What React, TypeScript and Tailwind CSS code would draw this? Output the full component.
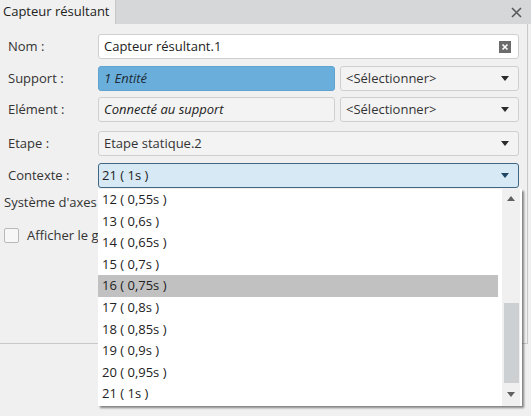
import React from "react";

const items = [
  "12 ( 0,55s )",
  "13 ( 0,6s )",
  "14 ( 0,65s )",
  "15 ( 0,7s )",
  "16 ( 0,75s )",
  "17 ( 0,8s )",
  "18 ( 0,85s )",
  "19 ( 0,9s )",
  "20 ( 0,95s )",
  "21 ( 1s )",
];

function Caret({ color = "#2b2b2b" }: { color?: string }) {
  return (
    <svg width="8" height="5" viewBox="0 0 8 5" className="shrink-0">
      <path d="M0 0 H8 L4 5 Z" fill={color} />
    </svg>
  );
}

function Select({ text, className = "" }: { text: string; className?: string }) {
  return (
    <div
      className={
        "h-[25px] flex items-center justify-between pl-[5px] pr-[9px] rounded-[3px] border border-[#cfcfcf] bg-[#f3f3f3] " +
        className
      }
    >
      <span>{text}</span>
      <Caret />
    </div>
  );
}

function Row({ label, children, className = "" }: { label: string; children: React.ReactNode; className?: string }) {
  return (
    <div className={"flex items-center " + className}>
      <div className="w-[98px] shrink-0 pl-[8px]">{label}</div>
      <div className="flex-1 flex gap-[5px] pr-[8px]">{children}</div>
    </div>
  );
}

export default function App() {
  return (
    <div
      className="relative w-[531px] h-[416px] overflow-hidden bg-[#f0f0f0] text-[13px] text-[#333]"
      style={{ fontFamily: '"Open Sans", "Noto Sans", sans-serif' }}
    >
      {/* tab bar */}
      <div className="h-[24px] flex bg-[#d5d7d9]">
        <div className="h-[24px] bg-[#f0f0f0] border-r border-[#c4c6c8] pl-[3px] pr-[5px] flex items-center text-[#222]">
          Capteur résultant
        </div>
        <div className="flex-1" />
        <div className="w-[24px] flex items-center justify-center pr-[6px]">
          <svg width="11" height="11" viewBox="0 0 11 11">
            <path d="M1 1 L10 10 M10 1 L1 10" stroke="#5a5a5a" strokeWidth="1.6" />
          </svg>
        </div>
      </div>

      {/* panel */}
      <div className="w-[528px] h-[320px] border-r border-b border-[#c9c9c9] pt-[10px]">
        <Row label="Nom :">
          <div className="flex-1 h-[25px] flex items-center justify-between pl-[5px] pr-[7px] rounded-[3px] border border-[#cfcfcf] bg-white text-[#222]">
            <span>Capteur résultant.1</span>
            <div className="w-[12px] h-[12px] bg-[#6b6b6b] flex items-center justify-center">
              <svg width="8" height="8" viewBox="0 0 8 8">
                <path d="M1.5 1.5 L6.5 6.5 M6.5 1.5 L1.5 6.5" stroke="white" strokeWidth="1.6" />
              </svg>
            </div>
          </div>
        </Row>
        <Row label="Support :" className="mt-[7px]">
          <div className="w-[237px] h-[25px] flex items-center pl-[5px] rounded-[3px] border border-[#5fa3cf] bg-[#6aafdb] italic text-[#1d2b36]">
            1 Entité
          </div>
          <Select text="<Sélectionner>" className="flex-1" />
        </Row>
        <Row label="Elément :" className="mt-[6px]">
          <div className="w-[237px] h-[25px] flex items-center pl-[5px] rounded-[3px] border border-[#cfcfcf] bg-[#f3f3f3] italic text-[#222]">
            Connecté au support
          </div>
          <Select text="<Sélectionner>" className="flex-1" />
        </Row>
        <Row label="Etape :" className="mt-[9px]">
          <Select text="Etape statique.2" className="flex-1" />
        </Row>
        <Row label="Contexte :" className="mt-[7px]">
          <div className="flex-1 h-[25px] flex items-center justify-between pl-[3px] pr-[9px] rounded-[3px] border border-[#3f6683] bg-[#d6e9f5] text-[#222]">
            <span>21 ( 1s )</span>
            <Caret color="#1f4563" />
          </div>
        </Row>
        {/* these two rows are covered by the open list; clip them at its left edge */}
        <div className="mt-[5px] pl-[4px] w-[98px] h-[20px] flex items-center overflow-hidden whitespace-nowrap">
          Système d'axes :
        </div>
        <div className="mt-[13px] pl-[4px] w-[98px] flex items-center gap-[8px] overflow-hidden whitespace-nowrap">
          <div className="w-[15px] h-[15px] shrink-0 border border-[#b9b9b9] bg-[#f7f7f7] rounded-[2px]" />
          <span>Afficher le graphe</span>
        </div>
      </div>

      {/* open dropdown list */}
      <div className="absolute left-[98px] top-[189px] w-[424px] h-[217px] bg-white flex shadow-[2px_2px_2px_rgba(0,0,0,0.45)] text-[#222]">
        <div className="flex-1 flex flex-col pr-[4px]">
          {items.map((it, i) => (
            <div
              key={it}
              className={"h-[21.6px] flex items-center pl-[4px] " + (i === 4 ? "bg-[#c1c1c1]" : "")}
            >
              {it}
            </div>
          ))}
        </div>
        <div className="w-[18px] mr-[2px] bg-[#f0f0f0] flex flex-col items-center">
          <div className="h-[18px] flex items-center justify-center">
            <svg width="8" height="5" viewBox="0 0 8 5">
              <path d="M0 5 H8 L4 0 Z" fill="#606060" />
            </svg>
          </div>
          <div className="h-[96px]" />
          <div className="w-[15px] h-[80px] bg-[#cdd0d2]" />
          <div className="flex-1 flex items-center justify-center">
            <svg width="8" height="5" viewBox="0 0 8 5">
              <path d="M0 0 H8 L4 5 Z" fill="#606060" />
            </svg>
          </div>
        </div>
      </div>
    </div>
  );
}
